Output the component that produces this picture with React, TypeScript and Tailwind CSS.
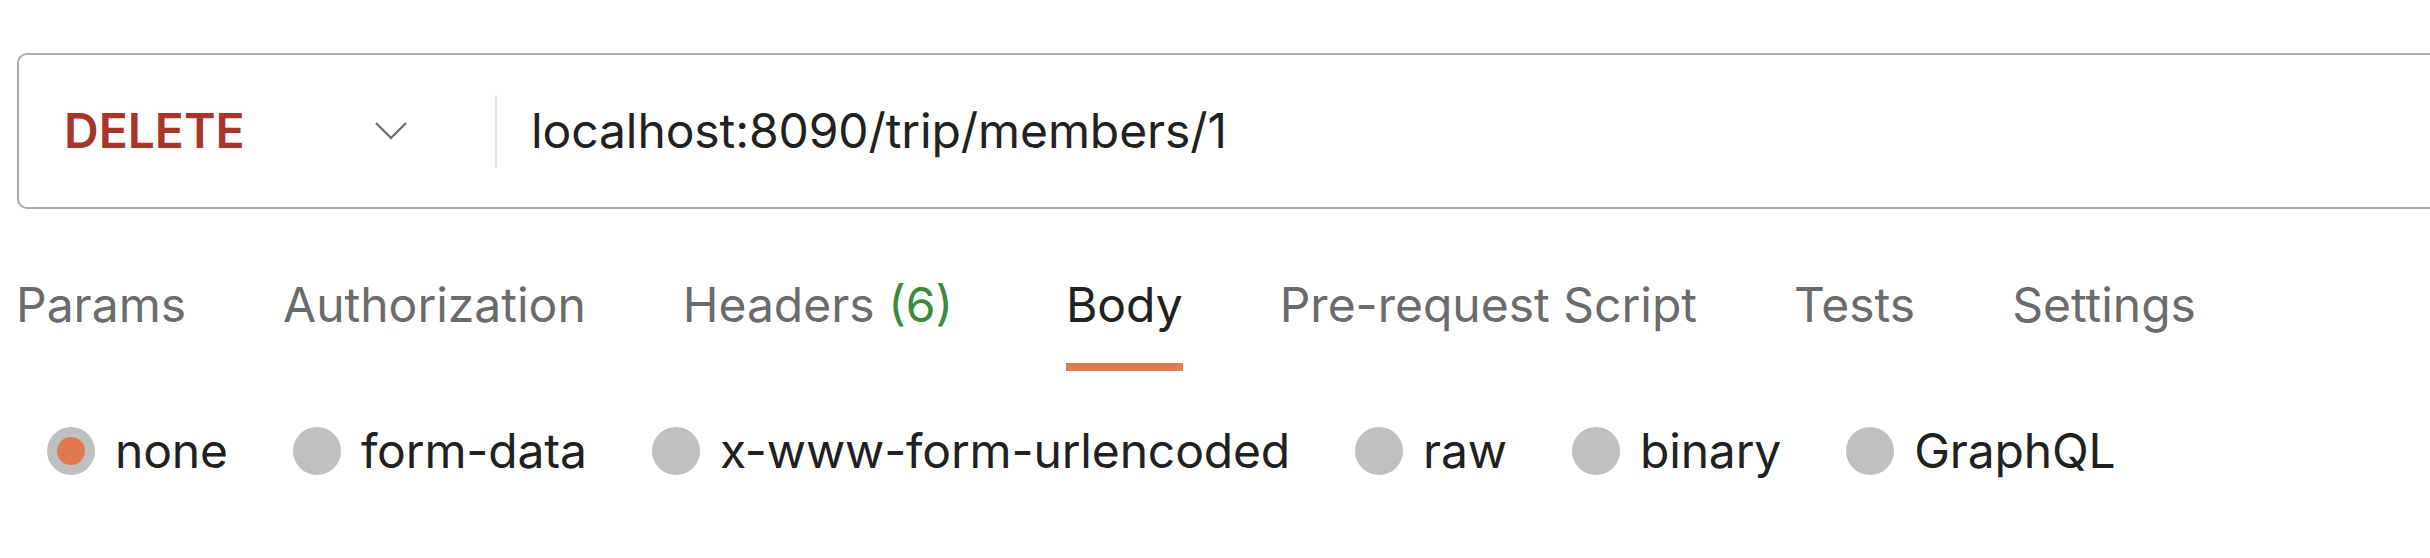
import React from "react";

const tabs = [
  { label: "Params" },
  { label: "Authorization" },
  { label: "Headers", count: "(6)" },
  { label: "Body", active: true },
  { label: "Pre-request Script" },
  { label: "Tests" },
  { label: "Settings" },
];

const radios = [
  { label: "none", checked: true },
  { label: "form-data" },
  { label: "x-www-form-urlencoded" },
  { label: "raw" },
  { label: "binary" },
  { label: "GraphQL" },
];

export default function App() {
  return (
    <div
      className="w-full h-[558px] overflow-hidden bg-white"
      style={{ fontFamily: "Inter, 'Noto Sans', sans-serif" }}
    >
      {/* Request bar */}
      <div className="pt-[53px] pl-[17px]">
        <div className="flex items-center h-[156px] w-[2460px] border-2 border-[#a9a9a9] rounded-[10px] bg-white">
          <div className="flex items-center w-[391px] pl-[45px]">
            <span className="flex-1 text-[48px] leading-[58px] font-semibold text-[#a8352a]">
              DELETE
            </span>
            <svg width="34" height="20" viewBox="0 0 34 20" className="shrink-0 -ml-[2px] mr-[2px]">
              <path d="M2 2 L17 17 L32 2" fill="none" stroke="#6b6b6b" strokeWidth="2.2" />
            </svg>
          </div>
          <div className="ml-[85px] w-[2px] h-[72px] bg-[#e3e3e3]" />
          <span className="ml-[34px] text-[48px] leading-[58px] text-[#212121] tracking-[-0.1px]">
            localhost:8090/trip/members/1
          </span>
        </div>
      </div>

      {/* Tabs */}
      <div className="flex items-start pl-[16px] pt-[67px] gap-[97px]">
        {tabs.map((t) => (
          <div
            key={t.label}
            className={`flex flex-col items-stretch ${t.active ? "ml-[16px]" : ""}`}
          >
            <span
              className={`text-[48px] leading-[58px] whitespace-nowrap ${
                t.active ? "text-[#212121]" : "text-[#6b6b6b]"
              }`}
            >
              {t.label}
              {t.count && <span className="text-[#3c8a3c]"> {t.count}</span>}
            </span>
            <div
              className={`mt-[29px] h-[8px] ${t.active ? "bg-[#e07a50]" : "bg-transparent"}`}
            />
          </div>
        ))}
      </div>

      {/* Radios */}
      <div className="flex items-center pl-[47px] mt-[51px] gap-[65px]">
        {radios.map((r) => (
          <div key={r.label} className="flex items-center gap-[20px]">
            <span className="flex items-center justify-center w-[48px] h-[48px] rounded-full bg-[#c0c0c0]">
              {r.checked && <span className="w-[28px] h-[28px] rounded-full bg-[#e07a50]" />}
            </span>
            <span className="text-[48px] leading-[58px] text-[#212121] whitespace-nowrap tracking-[-0.15px]">
              {r.label}
            </span>
          </div>
        ))}
      </div>
    </div>
  );
}
